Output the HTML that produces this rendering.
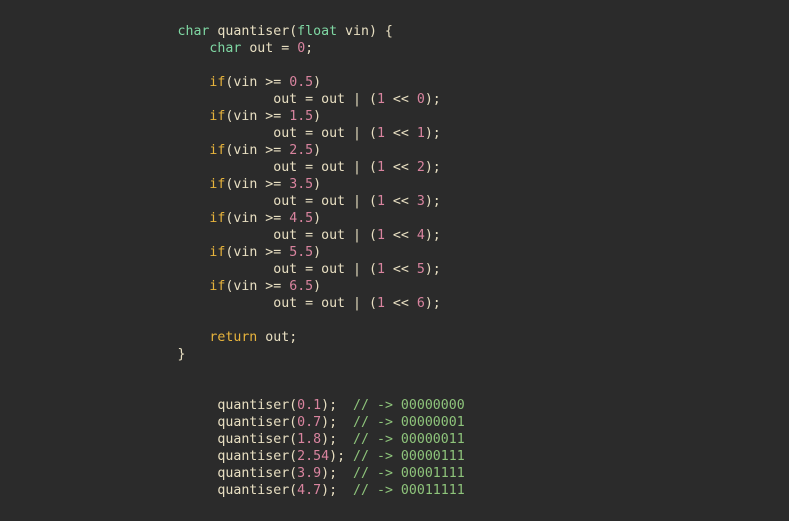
<!DOCTYPE html>
<html><head><style>
html,body{margin:0;padding:0;background:#2b2b2b;width:789px;height:521px;overflow:hidden}
pre{position:absolute;left:177.5px;top:23px;margin:0;font-family:"DejaVu Sans Mono","Liberation Mono",monospace;font-size:13.25px;line-height:17px;color:#e8dfc2}
.t{color:#7fd7a3}.k{color:#e8b43c}.n{color:#d9849f}.c{color:#8ec47b}
</style></head><body>
<pre><span class="t">char</span> quantiser(<span class="t">float</span> vin) {
    <span class="t">char</span> out = <span class="n">0</span>;

    <span class="k">if</span>(vin &gt;= <span class="n">0.5</span>)
            out = out | (<span class="n">1</span> &lt;&lt; <span class="n">0</span>);
    <span class="k">if</span>(vin &gt;= <span class="n">1.5</span>)
            out = out | (<span class="n">1</span> &lt;&lt; <span class="n">1</span>);
    <span class="k">if</span>(vin &gt;= <span class="n">2.5</span>)
            out = out | (<span class="n">1</span> &lt;&lt; <span class="n">2</span>);
    <span class="k">if</span>(vin &gt;= <span class="n">3.5</span>)
            out = out | (<span class="n">1</span> &lt;&lt; <span class="n">3</span>);
    <span class="k">if</span>(vin &gt;= <span class="n">4.5</span>)
            out = out | (<span class="n">1</span> &lt;&lt; <span class="n">4</span>);
    <span class="k">if</span>(vin &gt;= <span class="n">5.5</span>)
            out = out | (<span class="n">1</span> &lt;&lt; <span class="n">5</span>);
    <span class="k">if</span>(vin &gt;= <span class="n">6.5</span>)
            out = out | (<span class="n">1</span> &lt;&lt; <span class="n">6</span>);

    <span class="k">return</span> out;
}


     quantiser(<span class="n">0.1</span>);  <span class="c">// -&gt; 00000000</span>
     quantiser(<span class="n">0.7</span>);  <span class="c">// -&gt; 00000001</span>
     quantiser(<span class="n">1.8</span>);  <span class="c">// -&gt; 00000011</span>
     quantiser(<span class="n">2.54</span>); <span class="c">// -&gt; 00000111</span>
     quantiser(<span class="n">3.9</span>);  <span class="c">// -&gt; 00001111</span>
     quantiser(<span class="n">4.7</span>);  <span class="c">// -&gt; 00011111</span></pre>
</body></html>
